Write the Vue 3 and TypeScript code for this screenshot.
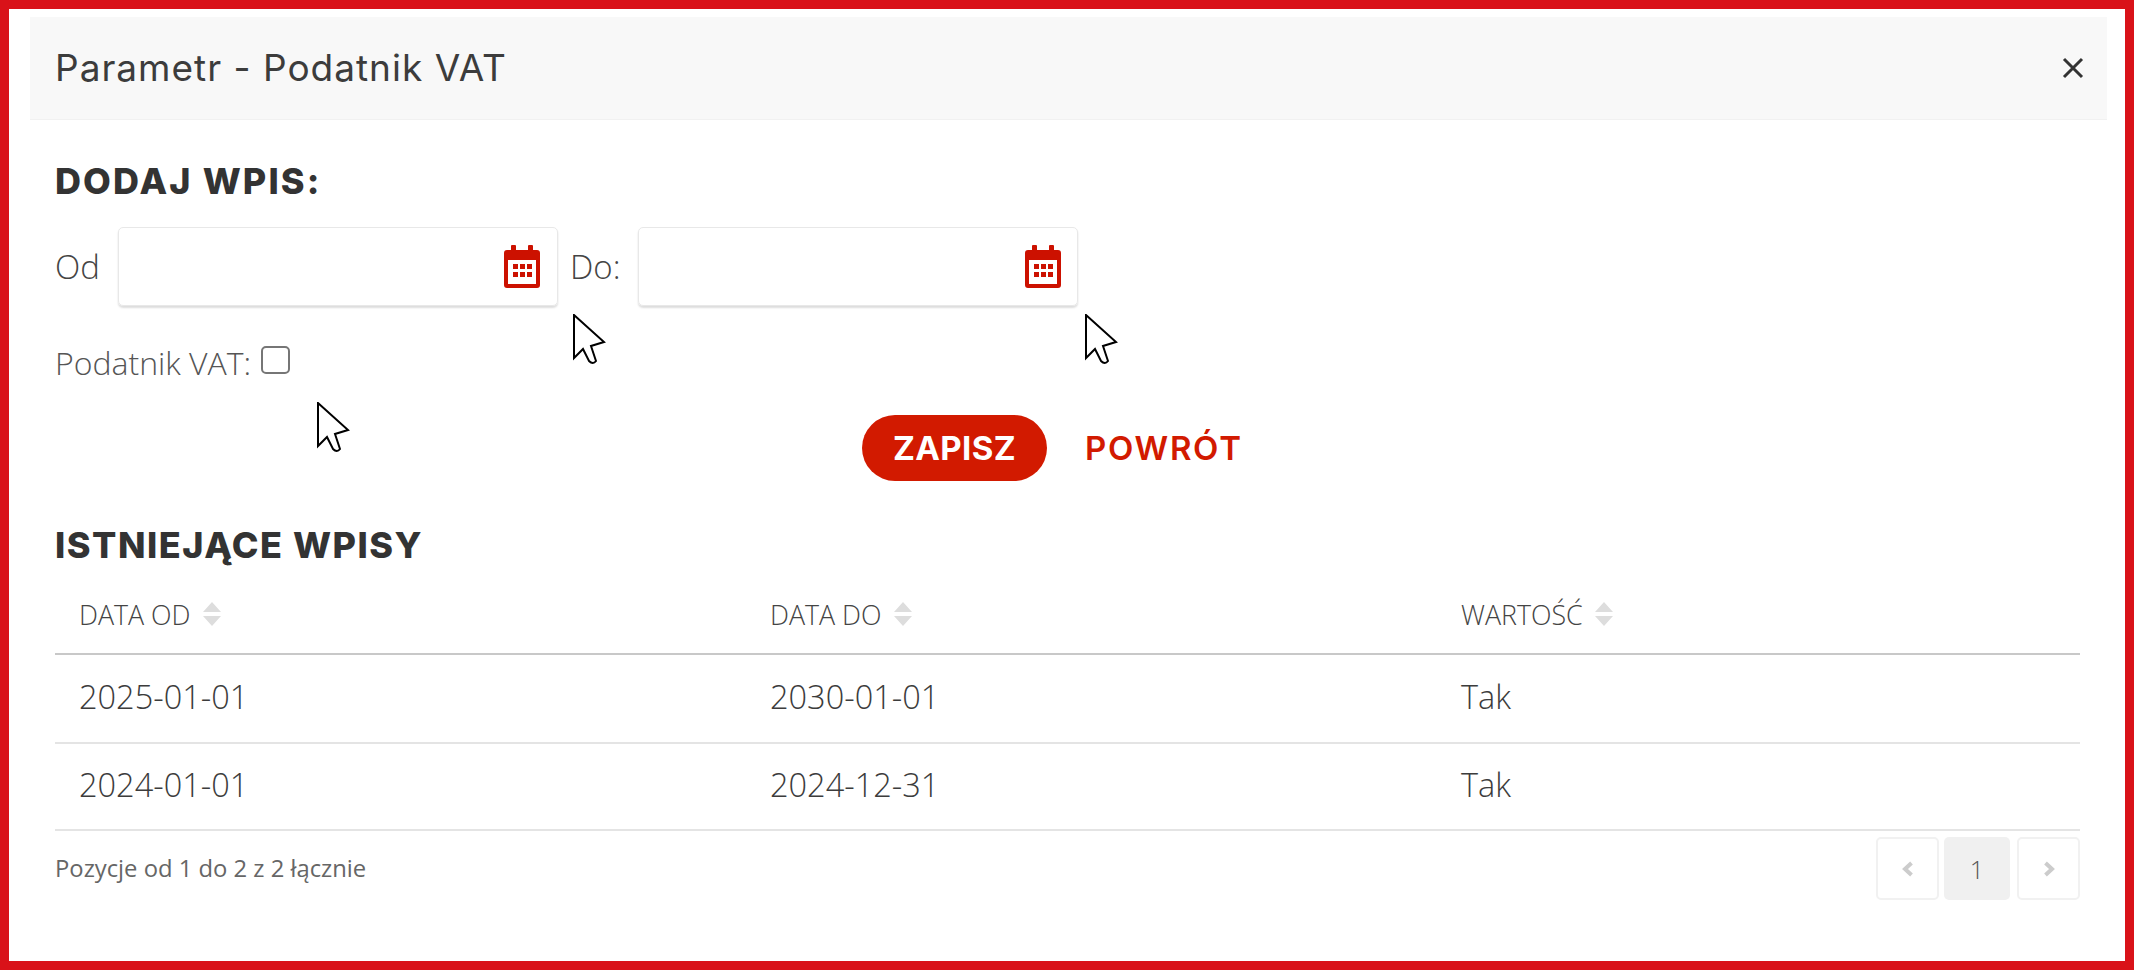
<script setup lang="ts">
const rows: [string, string, string][] = [
  ['2025-01-01', '2030-01-01', 'Tak'],
  ['2024-01-01', '2024-12-31', 'Tak'],
]
const heads: string[] = ['DATA OD', 'DATA DO', 'WARTOŚĆ']
const cursors: string[] = ['c1', 'c2', 'c3']
</script>

<template>
  <div class="frame">
    <header class="head">
      <h1>Parametr - Podatnik VAT</h1>
      <svg class="close" viewBox="0 0 22 22"><path d="M2 2 20 20M20 2 2 20" /></svg>
    </header>
    <main class="body">
      <h2 class="h-add">DODAJ WPIS:</h2>
      <div class="dates">
        <label class="l-od">Od</label>
        <div class="input first">
          <svg class="cal" viewBox="0 0 36 43"><path fill-rule="evenodd" d="M8 0h3a1 1 0 0 1 1 1v4h12V1a1 1 0 0 1 1-1h3a1 1 0 0 1 1 1v4h4a3 3 0 0 1 3 3v32a3 3 0 0 1-3 3H3a3 3 0 0 1-3-3V8a3 3 0 0 1 3-3h4V1a1 1 0 0 1 1-1ZM4 15v24h28V15Z" /><path d="M9 19h5v5H9zM16 19h5v5h-5zM23 19h5v5h-5zM9 27h5v5H9zM16 27h5v5h-5zM23 27h5v5h-5z" /></svg>
        </div>
        <label class="l-do">Do:</label>
        <div class="input">
          <svg class="cal" viewBox="0 0 36 43"><path fill-rule="evenodd" d="M8 0h3a1 1 0 0 1 1 1v4h12V1a1 1 0 0 1 1-1h3a1 1 0 0 1 1 1v4h4a3 3 0 0 1 3 3v32a3 3 0 0 1-3 3H3a3 3 0 0 1-3-3V8a3 3 0 0 1 3-3h4V1a1 1 0 0 1 1-1ZM4 15v24h28V15Z" /><path d="M9 19h5v5H9zM16 19h5v5h-5zM23 19h5v5h-5zM9 27h5v5H9zM16 27h5v5h-5zM23 27h5v5h-5z" /></svg>
        </div>
      </div>
      <div class="vat">
        <span>Podatnik VAT:</span>
        <span class="check"></span>
      </div>
      <div class="actions">
        <button class="save">ZAPISZ</button>
        <button class="back">POWRÓT</button>
      </div>
      <h2 class="h-list">ISTNIEJĄCE WPISY</h2>
      <table>
        <thead>
          <tr>
            <th v-for="h in heads" :key="h">
              <span class="th-in">{{ h }}
                <svg class="sort" viewBox="0 0 18 24"><path d="M9 0 18 10H0ZM9 24 0 14H18Z" /></svg>
              </span>
            </th>
          </tr>
        </thead>
        <tbody>
          <tr v-for="r in rows" :key="r[0]">
            <td v-for="c in r" :key="c">{{ c }}</td>
          </tr>
        </tbody>
      </table>
      <div class="foot">
        <span class="info">Pozycje od 1 do 2 z 2 łącznie</span>
        <nav class="pager">
          <span class="pg prev"><svg viewBox="0 0 12 16"><path d="M9.5 2 3 8l6.5 6" /></svg></span>
          <span class="pg cur">1</span>
          <span class="pg next"><svg viewBox="0 0 12 16"><path d="M2.5 2 9 8l-6.5 6" /></svg></span>
        </nav>
      </div>
    </main>
    <svg v-for="c in cursors" :key="c" class="cursor" :class="c" viewBox="0 0 33 51">
      <path d="M1 1V44L10 35 16 47Q20 51 23 47L18 32 31 28Z" />
    </svg>
  </div>
</template>

<style>
html, body { margin: 0; background: #fff; }
</style>

<style scoped>
.frame {
  position: relative;
  box-sizing: border-box;
  width: 2134px;
  height: 970px;
  border: 9px solid #d91219;
  padding: 8px 18px 0 21px;
  background: #fff;
  font-family: "Open Sans", sans-serif;
  font-weight: 300;
  color: #333;
  overflow: hidden;
}
.head {
  height: 103px;
  background: #f8f8f8;
  border-bottom: 1px solid #f1f1f1;
  box-sizing: border-box;
  display: flex;
  align-items: center;
  justify-content: space-between;
  padding: 0 23px 1px 25px;
}
h1 {
  margin: 0;
  font-family: Inter, sans-serif;
  font-weight: 400;
  font-size: 37px;
  letter-spacing: 1px;
  color: #3c3c3c;
}
.close { width: 22px; height: 22px; }
.close path { stroke: #333; stroke-width: 3; fill: none; }
.body { padding: 0 27px 0 25px; }
h2 {
  margin: 0;
  font-family: Inter, sans-serif;
  font-weight: 800;
  font-size: 36px;
  letter-spacing: 1.7px;
  line-height: 40px;
  color: #333;
}
.h-add { margin-top: 41px; letter-spacing: 2.1px; }
.dates {
  display: flex;
  align-items: center;
  margin-top: 26px;
  font-size: 33px;
  color: #444;
}
.l-od { width: 63px; }
.l-do { width: 80px; padding-left: 12px; box-sizing: border-box; }
.input {
  box-sizing: border-box;
  width: 440px;
  height: 79px;
  border: 1px solid #e8e8e8;
  border-radius: 5px;
  box-shadow: 0 2px 2px #ddd;
  display: flex;
  align-items: center;
  justify-content: flex-end;
  padding-right: 16px;
}
.first { padding-right: 17px; }
.cal { width: 36px; height: 43px; fill: #cc1100; }
.vat {
  display: flex;
  align-items: flex-start;
  gap: 10px;
  margin-top: 37px;
  font-size: 32px;
  line-height: 40px;
  color: #555;
}
.check {
  box-sizing: border-box;
  width: 29px;
  height: 28px;
  margin-top: 3px;
  border: 2px solid #767676;
  border-radius: 5px;
}
.actions {
  display: flex;
  align-items: center;
  margin: 32px 0 0 807px;
}
button {
  font-family: Inter, sans-serif;
  font-weight: 700;
  font-size: 33px;
  letter-spacing: .4px;
  border: 0;
  padding: 0;
}
.save {
  width: 185px;
  height: 66px;
  border-radius: 33px;
  background: #d21a00;
  color: #fff;
}
.back {
  margin-left: 38px;
  background: none;
  font-weight: 600;
  letter-spacing: 1.7px;
  color: #d21a00;
}
.h-list { margin-top: 44px; letter-spacing: 1.5px; }
table {
  width: 2025px;
  border-collapse: collapse;
  table-layout: fixed;
  margin-top: 2px;
}
th:nth-child(1), th:nth-child(2) { width: 691px; }
th {
  height: 87px;
  padding: 8px 0 0 24px;
  text-align: left;
  font-weight: 300;
  font-size: 26.8px;
  color: #444;
  border-bottom: 2px solid #c8c8c8;
  box-sizing: border-box;
}
.th-in { display: inline-flex; align-items: center; gap: 12px; }
.sort { width: 18px; height: 24px; fill: #ddd; }
td {
  height: 89px;
  padding: 0 0 5px 24px;
  font-size: 32.5px;
  color: #3c3c3c;
  border-bottom: 2px solid #e4e4e4;
  box-sizing: border-box;
}
tbody tr:last-child td { height: 87px; }
.foot {
  display: flex;
  justify-content: space-between;
  align-items: flex-start;
  margin-top: 6px;
}
.info {
  font-weight: 400;
  font-size: 23.8px;
  line-height: 63px;
  color: #666;
}
.pager { display: flex; gap: 5px; }
.pg {
  box-sizing: border-box;
  height: 63px;
  border-radius: 5px;
  display: flex;
  align-items: center;
  justify-content: center;
  font-size: 25px;
  color: #555;
}
.prev, .next { width: 63px; border: 2px solid #f1f1f1; }
.next { margin-left: 2px; }
.cur { width: 66px; background: #f0f0f0; }
.pg svg { width: 12px; height: 16px; fill: none; stroke: #ccc; stroke-width: 4; }
.cursor { position: absolute; width: 33px; height: 51px; }
.cursor path { fill: #fff; stroke: #000; stroke-width: 2; stroke-linejoin: miter; }
.c1 { left: 564px; top: 305px; }
.c2 { left: 1076px; top: 305px; }
.c3 { left: 308px; top: 393px; }
</style>
